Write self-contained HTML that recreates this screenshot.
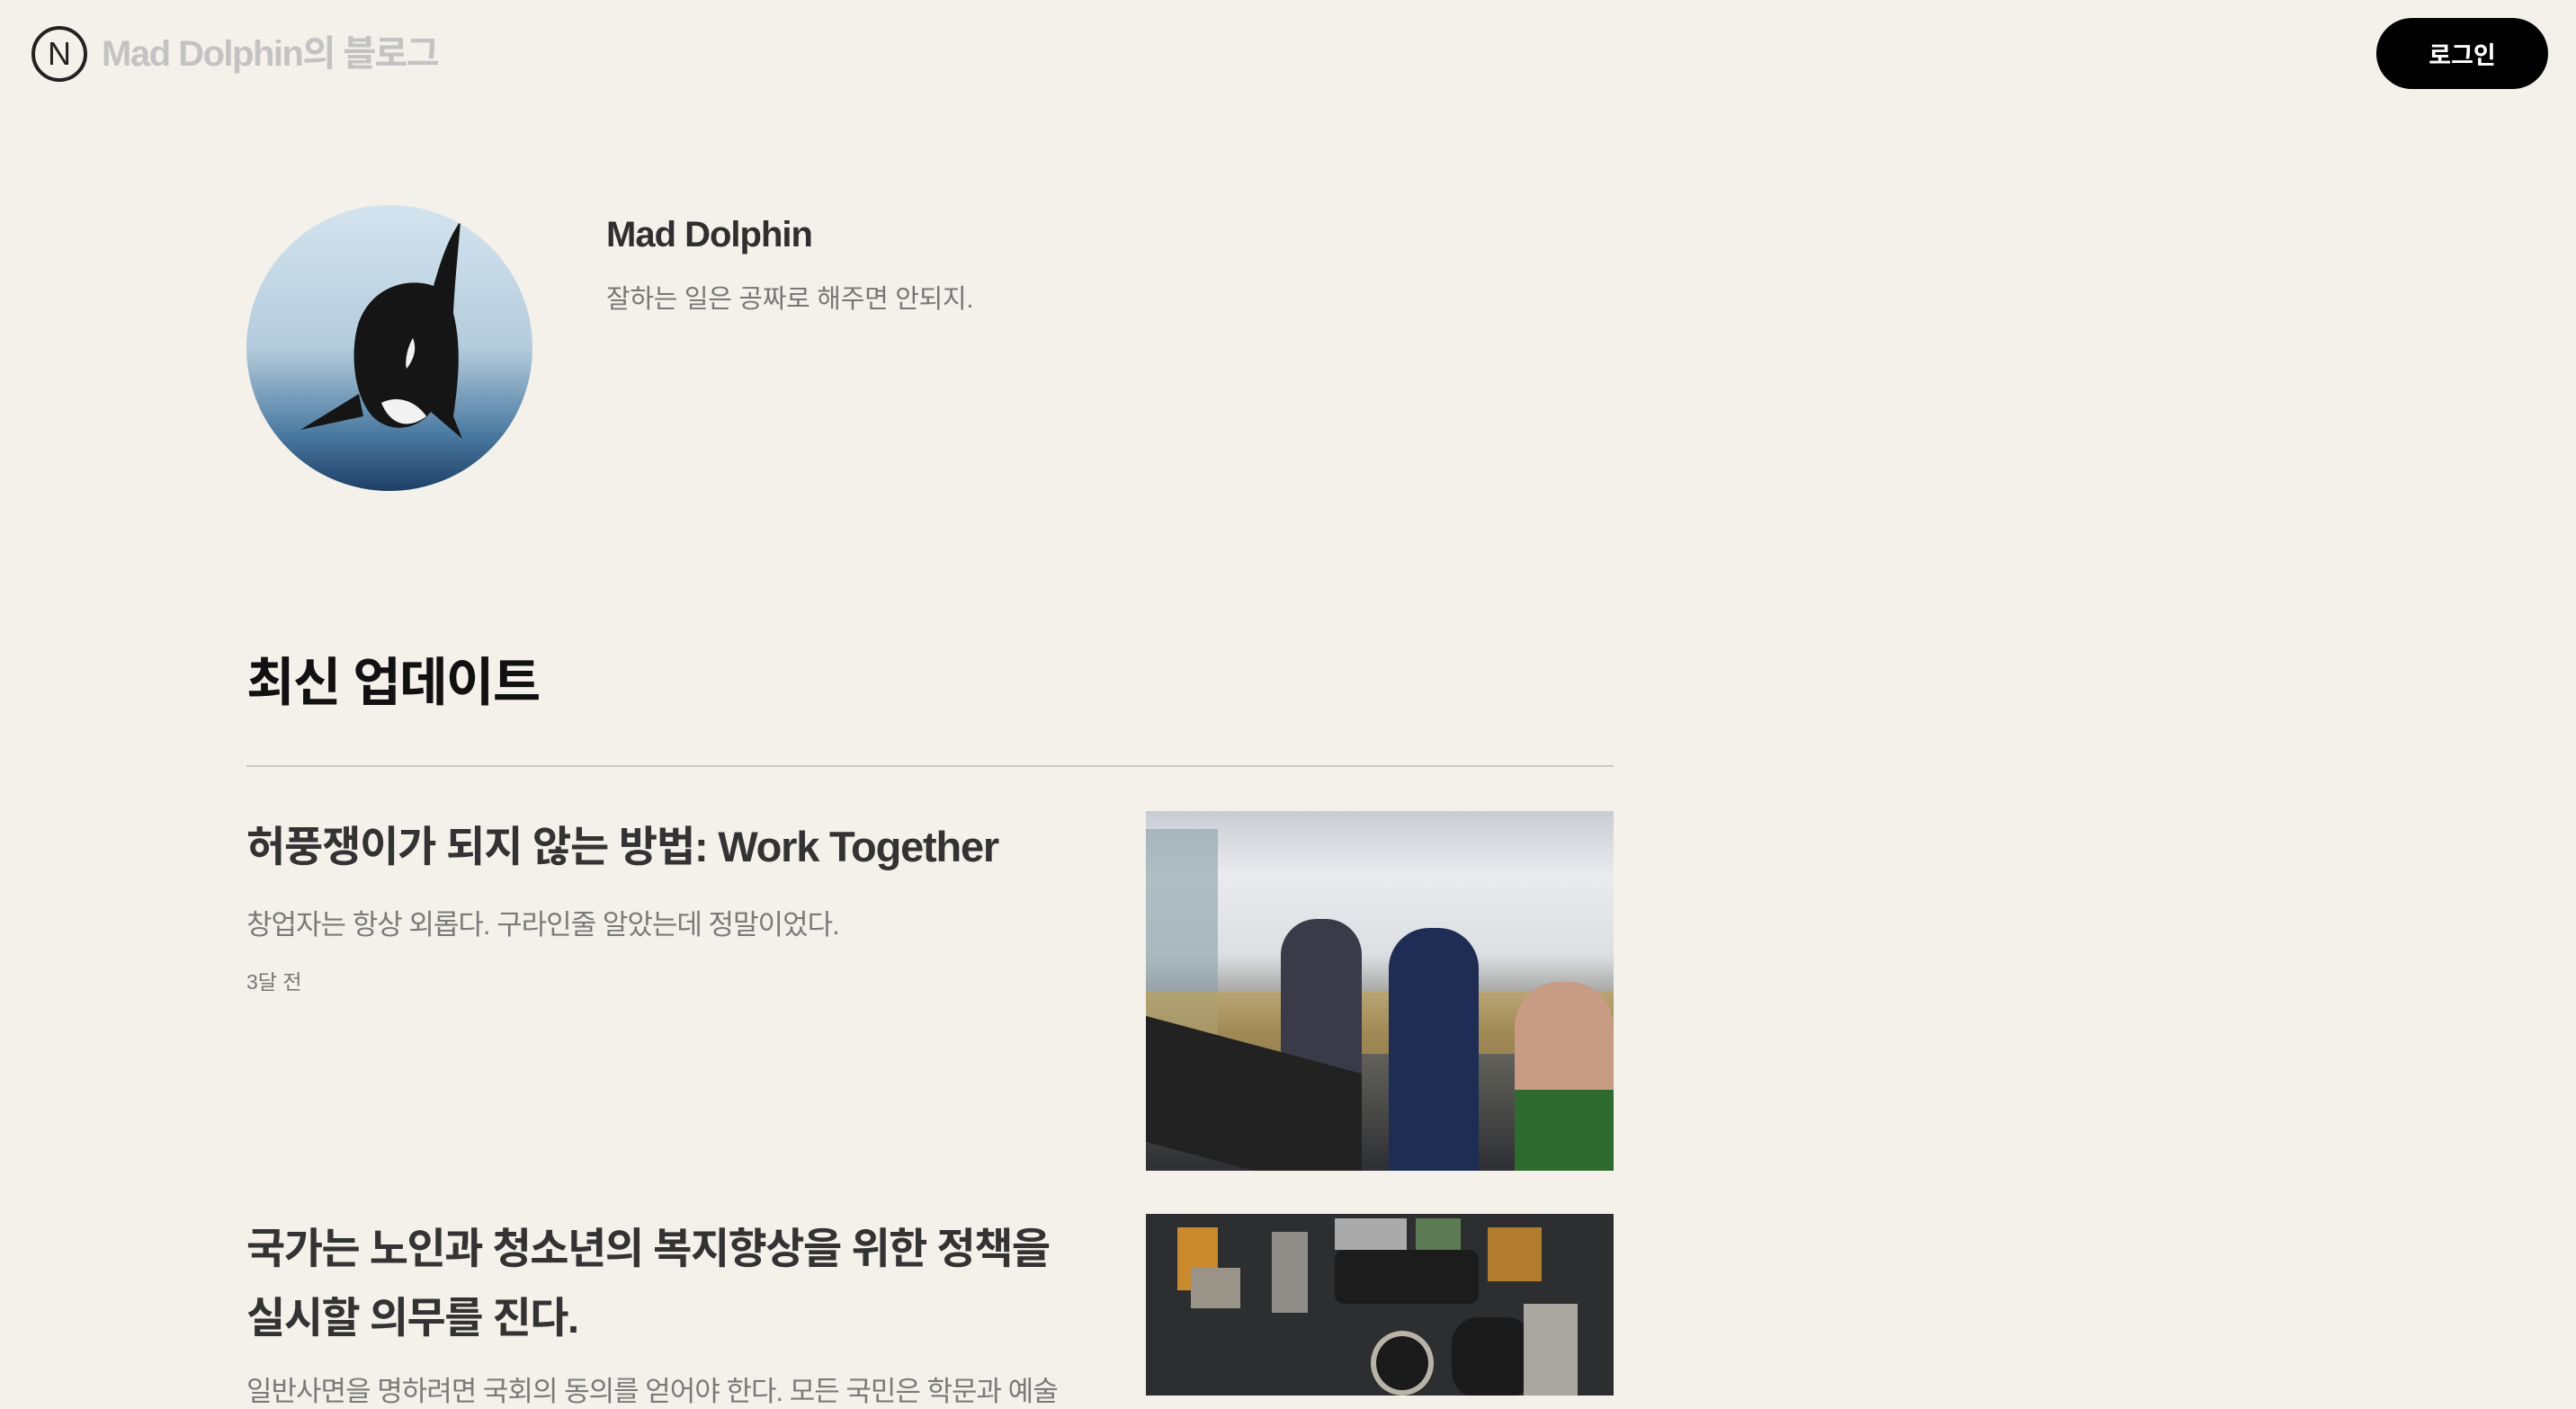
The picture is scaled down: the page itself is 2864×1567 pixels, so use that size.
<!DOCTYPE html>
<html lang="ko"><head><meta charset="utf-8">
<style>
*{margin:0;padding:0;box-sizing:border-box}
html,body{width:2864px;height:1552px;overflow:hidden;background:#f3f1ea;font-family:"Liberation Sans","Noto Sans CJK KR",sans-serif}
.abs{position:absolute}
.logo{left:35px;top:29px;width:62px;height:62px;border:4px solid #222;border-radius:50%;display:flex;align-items:center;justify-content:center;font-size:36px;color:#222;font-family:"Liberation Sans",sans-serif}
.brand{left:113px;top:34px;font-size:40px;font-weight:700;color:#c3c3c3;letter-spacing:-1.5px;line-height:52px}
.btn{left:2642px;top:20px;width:191px;height:79px;border-radius:40px;background:#000;color:#fff;font-size:27px;font-weight:700;display:flex;align-items:center;justify-content:center}
.name{left:674px;top:239px;font-size:40px;font-weight:700;color:#2f2f2f;letter-spacing:-1px}
.tag{left:674px;top:309px;font-size:29px;color:#777;letter-spacing:-0.3px}
.h2{left:274px;top:712px;font-size:58px;font-weight:700;color:#111;letter-spacing:-1.5px}
.line{left:274px;top:851px;width:1520px;height:2px;background:#c9c9c6}
.t1{left:274px;top:903px;font-size:47px;font-weight:700;color:#333;letter-spacing:-1.2px}
.d1{left:274px;top:1003px;font-size:31px;color:#7a7a7a;letter-spacing:-1px}
.dt{left:274px;top:1073px;font-size:23px;color:#777}
.t2{left:274px;top:1350px;width:1100px;font-size:47px;font-weight:700;color:#333;line-height:77px;letter-spacing:-1.5px}
.d2{left:274px;top:1522px;font-size:31px;color:#7a7a7a;white-space:nowrap;letter-spacing:-1px}
.img1{left:1274px;top:902px;width:520px;height:400px;overflow:hidden;background:linear-gradient(180deg,#c9cdd3 0%,#e9ebee 18%,#dcdfe2 40%,#6b6a62 62%,#2e2f33 100%)}
.img2{left:1274px;top:1350px;width:520px;height:202px;background:#2d2e2f;overflow:hidden}
</style></head><body>
<div class="abs logo">N</div>
<div class="abs brand">Mad Dolphin의 블로그</div>
<div class="abs btn">로그인</div>

<svg class="abs" style="left:274px;top:228px" width="318" height="318" viewBox="0 0 318 318">
<defs><clipPath id="c"><circle cx="159" cy="159" r="159"/></clipPath>
<linearGradient id="g" x1="0" y1="0" x2="0" y2="1"><stop offset="0" stop-color="#d4e3ee"/><stop offset=".5" stop-color="#b4ccdc"/><stop offset=".8" stop-color="#4b7aa1"/><stop offset="1" stop-color="#1e3f66"/></linearGradient></defs>
<g clip-path="url(#c)"><rect width="318" height="318" fill="url(#g)"/>
<path d="M238 18 C222 40 214 70 208 90 C180 80 140 90 125 130 C115 160 118 210 140 235 C160 255 190 250 205 230 L240 260 L230 235 C235 200 240 160 230 120 C232 80 236 45 238 18Z" fill="#151515"/>
<path d="M150 220 C160 245 180 250 200 235 C190 220 170 210 150 220Z" fill="#f2f2f2"/>
<path d="M185 148 C178 160 176 175 178 182 C186 172 190 160 185 148Z" fill="#f2f2f2"/>
<path d="M125 210 L60 250 L130 235Z" fill="#151515"/>
</g></svg>

<div class="abs name">Mad Dolphin</div>
<div class="abs tag">잘하는 일은 공짜로 해주면 안되지.</div>
<div class="abs h2">최신 업데이트</div>
<div class="abs line"></div>

<div class="abs t1">허풍쟁이가 되지 않는 방법: Work Together</div>
<div class="abs d1">창업자는 항상 외롭다. 구라인줄 알았는데 정말이었다.</div>
<div class="abs dt">3달 전</div>
<div class="abs img1">
<div class="abs" style="left:0;top:20px;width:80px;height:260px;background:#8a9ea6;opacity:.6"></div>
<div class="abs" style="left:0;top:200px;width:520px;height:70px;background:#c9a24a;opacity:.55"></div>
<div class="abs" style="left:150px;top:120px;width:90px;height:260px;border-radius:40px 40px 0 0;background:#3a3a48"></div>
<div class="abs" style="left:270px;top:130px;width:100px;height:270px;border-radius:45px 45px 0 0;background:#1f2d55"></div>
<div class="abs" style="left:410px;top:190px;width:110px;height:210px;border-radius:50px 50px 0 0;background:#c89b84"></div>
<div class="abs" style="left:410px;top:310px;width:110px;height:90px;background:#2f6a2f"></div>
<div class="abs" style="left:0;top:260px;width:240px;height:140px;background:#222;transform:skewY(15deg)"></div>
</div>

<div class="abs t2">국가는 노인과 청소년의 복지향상을 위한 정책을<br>실시할 의무를 진다.</div>
<div class="abs d2">일반사면을 명하려면 국회의 동의를 얻어야 한다. 모든 국민은 학문과 예술</div>
<div class="abs img2">
<div class="abs" style="left:35px;top:15px;width:45px;height:70px;background:#c98a2e"></div>
<div class="abs" style="left:50px;top:60px;width:55px;height:45px;background:#9a9388"></div>
<div class="abs" style="left:140px;top:20px;width:40px;height:90px;background:#b9b6ae;opacity:.7"></div>
<div class="abs" style="left:210px;top:40px;width:160px;height:60px;background:#1c1c1d;border-radius:10px"></div>
<div class="abs" style="left:210px;top:5px;width:80px;height:35px;background:#aaa"></div>
<div class="abs" style="left:300px;top:5px;width:50px;height:35px;background:#5c7a53"></div>
<div class="abs" style="left:250px;top:130px;width:70px;height:72px;border-radius:50%;border:6px solid #b7b3a8;background:#1a1a1a"></div>
<div class="abs" style="left:340px;top:115px;width:90px;height:90px;border-radius:30px;background:#1a1a1b"></div>
<div class="abs" style="left:380px;top:15px;width:60px;height:60px;background:#c98a2e;opacity:.85"></div>
<div class="abs" style="left:420px;top:100px;width:60px;height:102px;background:#aaa7a0"></div>
</div>
</body></html>
